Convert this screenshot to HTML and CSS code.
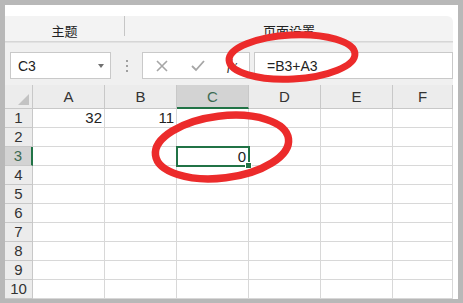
FILE: index.html
```html
<!DOCTYPE html>
<html lang="zh-CN">
<head>
  <meta charset="UTF-8">
  <title>公式</title>
  <link rel="stylesheet" href="styles.css">
</head>
<body>
  <div class="window">
    <div class="top-strip"></div>

    <div class="ribbon">
      <div class="group first">主题</div>
      <div class="sep"></div>
      <div class="group">页面设置</div>
    </div>

    <div class="formula-area">
      <div class="name-box">
        <span>C3</span>
        <span class="caret"></span>
      </div>
      <div class="dots"><i></i><i></i><i></i></div>
      <div class="buttons">
        <svg class="btn" width="14" height="14" viewBox="0 0 14 14">
          <path d="M2 2 L12 12 M12 2 L2 12" stroke="#a6a6a6" stroke-width="1.6" fill="none"/>
        </svg>
        <svg class="btn" width="16" height="14" viewBox="0 0 16 14">
          <path d="M2 7 L6 11 L14 2" stroke="#a6a6a6" stroke-width="1.8" fill="none"/>
        </svg>
        <span class="fx">fx</span>
      </div>
      <div class="formula">=B3+A3</div>
    </div>

    <div class="sheet">
      <div class="corner"><span class="tri"></span></div>
      <div class="col-head">A</div>
      <div class="col-head">B</div>
      <div class="col-head active">C</div>
      <div class="col-head">D</div>
      <div class="col-head">E</div>
      <div class="col-head">F</div>

      <div class="row-head">1</div>
      <div class="cell num">32</div>
      <div class="cell num">11</div>
      <div class="cell"></div><div class="cell"></div><div class="cell"></div><div class="cell"></div>

      <div class="row-head">2</div>
      <div class="cell"></div><div class="cell"></div><div class="cell"></div><div class="cell"></div><div class="cell"></div><div class="cell"></div>

      <div class="row-head active">3</div>
      <div class="cell"></div><div class="cell"></div>
      <div class="cell num selected">0<span class="handle"></span></div>
      <div class="cell"></div><div class="cell"></div><div class="cell"></div>

      <div class="row-head">4</div>
      <div class="cell"></div><div class="cell"></div><div class="cell"></div><div class="cell"></div><div class="cell"></div><div class="cell"></div>
      <div class="row-head">5</div>
      <div class="cell"></div><div class="cell"></div><div class="cell"></div><div class="cell"></div><div class="cell"></div><div class="cell"></div>
      <div class="row-head">6</div>
      <div class="cell"></div><div class="cell"></div><div class="cell"></div><div class="cell"></div><div class="cell"></div><div class="cell"></div>
      <div class="row-head">7</div>
      <div class="cell"></div><div class="cell"></div><div class="cell"></div><div class="cell"></div><div class="cell"></div><div class="cell"></div>
      <div class="row-head">8</div>
      <div class="cell"></div><div class="cell"></div><div class="cell"></div><div class="cell"></div><div class="cell"></div><div class="cell"></div>
      <div class="row-head">9</div>
      <div class="cell"></div><div class="cell"></div><div class="cell"></div><div class="cell"></div><div class="cell"></div><div class="cell"></div>
      <div class="row-head">10</div>
      <div class="cell"></div><div class="cell"></div><div class="cell"></div><div class="cell"></div><div class="cell"></div><div class="cell"></div>
    </div>
  </div>

  <!-- red marks drawn over the screenshot -->
  <svg class="marks" width="463" height="303" viewBox="0 0 463 303">
    <ellipse cx="292" cy="57" rx="63" ry="22" transform="rotate(-3 292 57)" fill="none" stroke="#ec2b2b" stroke-width="7"/>
    <ellipse cx="222" cy="147" rx="67" ry="31" transform="rotate(-7 222 147)" fill="none" stroke="#ec2b2b" stroke-width="7.5"/>
  </svg>
</body>
</html>
```

FILE: styles.css
```css
body {
  margin: 0;
  width: 463px;
  height: 303px;
  background-color: #b8b8b8;
  font-family: "Liberation Sans", "Noto Sans CJK SC", sans-serif;
  overflow: hidden;
  position: relative;
}

.window {
  margin: 5px 0 0 5px;
  width: 453px;
  height: 294px;
  background-color: #fff;
  padding-right: 5px;
  box-sizing: border-box;
  overflow: hidden;
}

.top-strip {
  height: 11px;
}

.ribbon {
  height: 25px;
  display: flex;
  align-items: flex-start;
  background-color: #f3f3f3;
  border-top-right-radius: 6px;
  border-bottom: 1px solid #d6d6d6;
  font-size: 13px;
  color: #222;
}

.ribbon .group {
  flex: 1;
  text-align: center;
  line-height: 14px;
  padding-top: 9px;
}

.ribbon .group.first {
  flex: 0 0 119px;
}

.sep {
  width: 1px;
  height: 20px;
  background-color: #c6c6c6;
}

.formula-area {
  height: 43px;
  background-color: #f0f0f0;
  border-top: 1px solid #e2e2e2;
  display: flex;
  align-items: flex-start;
  padding: 9px 0 0 5px;
  box-sizing: border-box;
}

.name-box,
.buttons,
.formula {
  height: 27px;
  background-color: #fff;
  border: 1px solid #c9c9c9;
  box-sizing: border-box;
  display: flex;
  align-items: center;
}

.name-box {
  width: 101px;
  padding: 0 6px 0 7px;
  justify-content: space-between;
  font-size: 14px;
  color: #222;
}

.caret {
  width: 0;
  height: 0;
  border-left: 3.5px solid transparent;
  border-right: 3.5px solid transparent;
  border-top: 4px solid #707070;
}

.dots {
  width: 31px;
  height: 27px;
  display: flex;
  flex-direction: column;
  align-items: center;
  justify-content: center;
  gap: 3px;
}

.dots i {
  width: 2px;
  height: 2px;
  background-color: #a0a0a0;
}

.buttons {
  width: 108px;
  padding-left: 12px;
  gap: 21px;
}

.fx {
  font-family: "Liberation Serif", serif;
  font-style: italic;
  font-size: 14px;
  color: #333;
}

.formula {
  flex: 1;
  margin-left: 4px;
  padding-left: 12px;
  font-size: 14px;
  color: #222;
}

.sheet {
  display: grid;
  grid-template-columns: 28px repeat(5, 72px) 60px;
  grid-template-rows: 24px repeat(10, 19px);
  font-size: 15px;
}

.corner,
.col-head,
.row-head,
.cell {
  box-sizing: border-box;
  border-right: 1px solid #d8d8d8;
  border-bottom: 1px solid #d8d8d8;
}

.corner {
  background-color: #ececec;
  position: relative;
  border-color: #c8c8c8;
}

.tri {
  position: absolute;
  right: 3px;
  bottom: 3px;
  width: 0;
  height: 0;
  border-left: 11px solid transparent;
  border-bottom: 11px solid #c3c3c3;
}

.col-head {
  background-color: #ececec;
  border-right-color: #c8c8c8;
  border-bottom-color: #c8c8c8;
  text-align: center;
  line-height: 23px;
  color: #333;
}

.col-head.active {
  background-color: #d3d3d3;
  border-bottom: 2px solid #217346;
  color: #3d6b52;
}

.row-head {
  background-color: #ececec;
  border-right-color: #c8c8c8;
  border-bottom-color: #c8c8c8;
  text-align: center;
  line-height: 18px;
  color: #333;
}

.row-head.active {
  background-color: #d3d3d3;
  border-right: 2px solid #217346;
  color: #3d6b52;
}

.cell {
  line-height: 18px;
  color: #222;
}

.cell.num {
  text-align: right;
  padding-right: 2px;
}

.cell.selected {
  position: relative;
  border: 2px solid #217346;
  margin: -1px 0 0 -1px;
  width: 74px;
  height: 21px;
  line-height: 17px;
}

.handle {
  position: absolute;
  right: -4px;
  bottom: -4px;
  width: 5px;
  height: 5px;
  background-color: #217346;
  border: 1px solid #fff;
}

.marks {
  position: absolute;
  left: 0;
  top: 0;
  pointer-events: none;
}
```
